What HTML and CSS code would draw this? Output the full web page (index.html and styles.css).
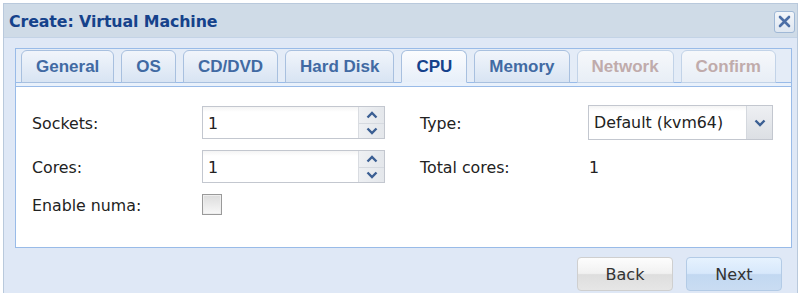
FILE: index.html
```html
<!DOCTYPE html>
<html lang="en">
<head>
    <meta charset="UTF-8">
    <title>Create: Virtual Machine</title>
    <link rel="stylesheet" href="styles.css">
</head>
<body>

<!-- Вікно створення VM -->
<div class="window">
    <div class="window-header">
        <span class="window-title">Create: Virtual Machine</span>
        <span class="close-btn">
            <svg width="15" height="15" viewBox="0 0 15 15">
                <path d="M3 3 L12 12 M12 3 L3 12" stroke="#4d6fa6" stroke-width="2.6" stroke-linecap="round"/>
            </svg>
        </span>
    </div>

    <div class="window-body">
        <div class="tab-panel">
            <div class="tab-bar">
                <div class="tab">General</div>
                <div class="tab">OS</div>
                <div class="tab">CD/DVD</div>
                <div class="tab">Hard Disk</div>
                <div class="tab active">CPU</div>
                <div class="tab">Memory</div>
                <div class="tab disabled">Network</div>
                <div class="tab disabled">Confirm</div>
            </div>
            <div class="tab-strip"></div>

            <div class="tab-content">
                <div class="form-col left-col">
                    <div class="form-row">
                        <label class="field-label">Sockets:</label>
                        <div class="spinner">
                            <span class="spinner-value">1</span>
                            <span class="spinner-btns">
                                <span class="spin-up">
                                    <svg width="12" height="8" viewBox="0 0 12 8"><path d="M1.5 6.5 L6 2 L10.5 6.5" fill="none" stroke="#3b5f93" stroke-width="2.4"/></svg>
                                </span>
                                <span class="spin-down">
                                    <svg width="12" height="8" viewBox="0 0 12 8"><path d="M1.5 1.5 L6 6 L10.5 1.5" fill="none" stroke="#3b5f93" stroke-width="2.4"/></svg>
                                </span>
                            </span>
                        </div>
                    </div>
                    <div class="form-row">
                        <label class="field-label">Cores:</label>
                        <div class="spinner">
                            <span class="spinner-value">1</span>
                            <span class="spinner-btns">
                                <span class="spin-up">
                                    <svg width="12" height="8" viewBox="0 0 12 8"><path d="M1.5 6.5 L6 2 L10.5 6.5" fill="none" stroke="#3b5f93" stroke-width="2.4"/></svg>
                                </span>
                                <span class="spin-down">
                                    <svg width="12" height="8" viewBox="0 0 12 8"><path d="M1.5 1.5 L6 6 L10.5 1.5" fill="none" stroke="#3b5f93" stroke-width="2.4"/></svg>
                                </span>
                            </span>
                        </div>
                    </div>
                    <div class="form-row check-row">
                        <label class="field-label">Enable numa:</label>
                        <span class="checkbox"></span>
                    </div>
                </div>

                <div class="form-col right-col">
                    <div class="form-row">
                        <label class="field-label short">Type:</label>
                        <div class="combo">
                            <span class="combo-value">Default (kvm64)</span>
                            <span class="combo-trigger">
                                <svg width="12" height="8" viewBox="0 0 12 8"><path d="M1.5 1.5 L6 6 L10.5 1.5" fill="none" stroke="#3b5f93" stroke-width="2.4"/></svg>
                            </span>
                        </div>
                    </div>
                    <div class="form-row">
                        <label class="field-label short">Total cores:</label>
                        <span class="display-value">1</span>
                    </div>
                </div>
            </div>
        </div>

        <div class="window-footer">
            <button class="btn btn-back">Back</button>
            <button class="btn btn-next">Next</button>
        </div>
    </div>
</div>

</body>
</html>
```

FILE: styles.css
```css
* {
    margin: 0;
    padding: 0;
    box-sizing: border-box;
}

body {
    background-color: #fff;
    font-family: "DejaVu Sans", Verdana, sans-serif;
    color: #222;
}

/* Вікно */
.window {
    width: 795px;
    height: 290px;
    margin: 3px 0 0 3px;
    border: 1px solid #b9c9dc;
    border-bottom: none;
    background: #dfe8f6;
}

.window-header {
    height: 34px;
    display: flex;
    align-items: center;
    justify-content: space-between;
    padding: 1px 2px 0 5px;
    background: #cfdbe7;
    border-bottom: 1px solid #c3d3e6;
}

.window-title {
    font-size: 15.8px;
    font-weight: bold;
    color: #15428b;
    letter-spacing: -0.1px;
}

.close-btn {
    width: 21px;
    height: 22px;
    display: flex;
    align-items: center;
    justify-content: center;
    background: linear-gradient(#f3f6fa, #dfe7f1);
    border: 1px solid #9fb8d6;
    border-radius: 3px;
    margin-top: 1px;
}

.window-body {
    padding: 10px 5px 0 11px;
}

/* Вкладки */
.tab-panel {
    border: 1px solid #99bbe8;
    background: #dfe8f6;
}

.tab-bar {
    display: flex;
    gap: 7px;
    padding: 1px 0 0 5px;
    border-bottom: 1px solid #99bbe8;
    background: #e4ecf7;
}

.tab {
    height: 33px;
    margin-bottom: -1px;
    padding: 0 14px;
    display: flex;
    align-items: center;
    font-family: "Liberation Sans", Arial, sans-serif;
    font-size: 17px;
    font-weight: bold;
    color: #416aa3;
    background: linear-gradient(#f1f5fb, #d8e4f3);
    border: 1px solid #a8c0df;
    border-radius: 6px 6px 0 0;
}

.tab.active {
    color: #15428b;
    background: linear-gradient(#fbfcfe, #e7eff9);
    border-bottom-color: #e9f1fb;
}

.tab.disabled {
    color: #c0abab;
    background: linear-gradient(#f6f8fb, #e8eef6);
    border-color: #c2d3e8;
}

.tab-strip {
    height: 4px;
    background: #e9f1fb;
    border-bottom: 1px solid #99bbe8;
}

.tab-content {
    height: 160px;
    background: #fff;
    display: flex;
    padding: 19px 0 0 16px;
}

/* Форма */
.form-col {
    display: flex;
    flex-direction: column;
    gap: 11px;
}

.left-col {
    width: 353px;
    margin-right: 35px;
}

.form-row {
    display: flex;
    align-items: center;
    height: 33px;
}

.field-label {
    width: 170px;
    font-size: 15.8px;
    color: #222;
    padding-top: 2px;
}

.field-label.short {
    width: 168px;
}

.spinner {
    width: 183px;
    height: 33px;
    display: flex;
    border: 1px solid #c3c7cf;
    background: linear-gradient(#f4f4f4, #fff 5px);
}

.spinner-value {
    flex: 1;
    padding: 7px 0 0 5px;
    font-size: 15.8px;
}

.spinner-btns {
    width: 26px;
    display: flex;
    flex-direction: column;
    background: linear-gradient(to right, #eef0f3, #e4e7eb);
    border-left: 1px solid #d9dce1;
}

.spin-up,
.spin-down {
    flex: 1;
    display: flex;
    align-items: center;
    justify-content: center;
}

.spin-up {
    border-bottom: 1px solid #d6dae0;
    padding-top: 1px;
}

.check-row {
    height: 25px;
    margin-top: -2px;
}

.checkbox {
    width: 20px;
    height: 21px;
    border: 1px solid #9a9a9a;
    background: linear-gradient(#dcdcdc, #f8f8f8);
    box-shadow: inset 0 0 0 1px #eee;
}

.combo {
    width: 185px;
    height: 35px;
    display: flex;
    border: 1px solid #c3c7cf;
    background: linear-gradient(#f4f4f4, #fff 5px);
}

.combo-value {
    flex: 1;
    padding: 7px 0 0 5px;
    font-size: 15.8px;
}

.combo-trigger {
    width: 26px;
    display: flex;
    align-items: center;
    justify-content: center;
    background: linear-gradient(#eef0f3, #dcdfe4);
    border-left: 1px solid #d4d8de;
}

.display-value {
    font-size: 15.8px;
    padding: 2px 0 0 1px;
}

/* Кнопки */
.window-footer {
    display: flex;
    justify-content: flex-end;
    gap: 13px;
    padding: 9px 10px 0 0;
}

.btn {
    width: 96px;
    height: 34px;
    font-family: "DejaVu Sans", Verdana, sans-serif;
    font-size: 16px;
    color: #333;
    border-radius: 4px;
    cursor: pointer;
}

.btn-back {
    border: 1px solid #cfcfcf;
    background: linear-gradient(#fdfdfd 0%, #f1f1f1 48%, #dedede 52%, #e6e6e6 100%);
}

.btn-next {
    border: 1px solid #b3cbe6;
    background: linear-gradient(#e6f2fe 0%, #d7e8fb 48%, #c2d8f1 52%, #c9dcf2 100%);
}
```
